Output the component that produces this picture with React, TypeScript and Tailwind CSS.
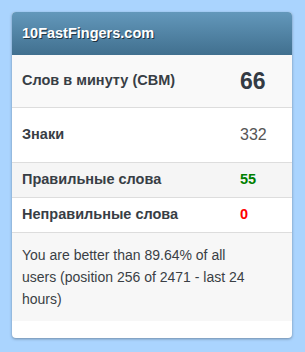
export default function App() {
  const rows = [
    { label: 'Слов в минуту (СВМ)', value: '66', h: 'h-[53px]', bg: 'bg-[#f9f9f9]', cls: 'text-[23px] font-bold text-[#333b44]' },
    { label: 'Знаки', value: '332', h: 'h-[55px]', bg: 'bg-white', cls: 'text-[16px] text-[#555]' },
    { label: 'Правильные слова', value: '55', h: 'h-[35px]', bg: 'bg-[#f5f5f5]', cls: 'text-[14.5px] font-bold text-[#008000]' },
    { label: 'Неправильные слова', value: '0', h: 'h-[35px]', bg: 'bg-white', cls: 'text-[14.5px] font-bold text-[#ff0000]' },
  ];

  return (
    <div className="min-h-[352px] w-[305px] bg-[#aad4fe] pt-[12px] pl-[12px] font-['Liberation_Sans',Arial,sans-serif]">
      <div className="w-[280px] overflow-hidden rounded-[4px] bg-white pb-[17px] shadow-[0_1px_3px_rgba(0,0,0,0.35)]">
        <div className="flex h-[43px] items-center bg-gradient-to-b from-[#6398bb] to-[#41708f] pl-[10px] text-[14.5px] font-bold text-white [text-shadow:1px_1px_0_rgba(0,0,0,0.6)]">
          10FastFingers.com
        </div>
        {rows.map((r) => (
          <div key={r.label} className={`flex items-center border-b border-[#dddddd] ${r.h} ${r.bg}`}>
            <div className="w-[228px] pl-[10px] text-[14.5px] font-bold text-[#383e45]">{r.label}</div>
            <div className={r.cls}>{r.value}</div>
          </div>
        ))}
        <div className="bg-[#f7f7f7] pl-[10px] pt-[11px] pb-[11px] text-[14px] leading-[22px] text-[#3a3f45]">
          <p className="w-[240px]">You are better than 89.64% of all users (position 256 of 2471 - last 24 hours)</p>
        </div>
      </div>
    </div>
  );
}
